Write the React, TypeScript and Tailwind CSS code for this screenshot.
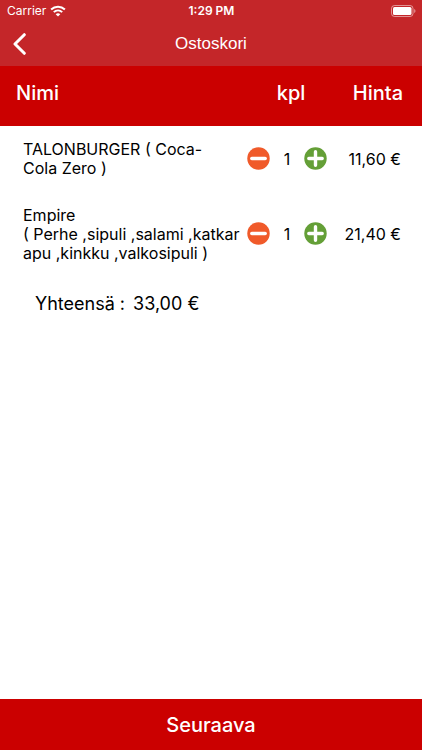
import React, { useState } from "react";

type Item = { id: string; name: string; price: number; count: number };

const initialItems: Item[] = [
  { id: "talonburger", name: "TALONBURGER ( Coca-\nCola Zero )", price: 11.6, count: 1 },
  { id: "empire", name: "Empire\n( Perhe ,sipuli ,salami ,katkar\napu ,kinkku ,valkosipuli )", price: 21.4, count: 1 },
];

const euros = (value: number) => value.toFixed(2).replace(".", ",") + " €";

function StatusBar() {
  return (
    <div className="grid h-[22px] grid-cols-3 items-center pr-1.5 pl-[7px] text-xs leading-4">
      <div className="flex items-center gap-1">
        <span>Carrier</span>
        <svg className="h-[12px] w-[16px]" viewBox="0 0 16 12" fill="none" stroke="currentColor" strokeWidth="2">
          <path d="M1.1 4.5C5 .7 11 .7 14.9 4.5" />
          <path d="M3.8 7.1C6.2 4.8 9.8 4.8 12.2 7.1" />
          <path d="M8 11.5 5.7 9.2C7 8 9 8 10.3 9.2Z" fill="currentColor" stroke="none" />
        </svg>
      </div>
      <span className="text-center font-semibold">1:29 PM</span>
      <svg className="h-[12px] w-[25px] justify-self-end" viewBox="0 0 25 12" fill="none">
        <rect x="0.5" y="0.5" width="21.5" height="11" rx="3" stroke="#fff" strokeOpacity="0.5" />
        <rect x="2" y="2" width="18.5" height="8" rx="1.5" fill="#fff" />
        <path d="M23.3 4v4c1.5-.6 1.5-3.4 0-4Z" fill="#fff" fillOpacity="0.6" />
      </svg>
    </div>
  );
}

function StepButton({ label, kind, onClick }: { label: string; kind: "minus" | "plus"; onClick: () => void }) {
  return (
    <button type="button" aria-label={label} onClick={onClick} className="cursor-pointer pb-0.5">
      <svg className="size-[23px]" viewBox="0 0 23 23" stroke="#fff" strokeWidth="3.4" strokeLinecap="round">
        <circle cx="11.5" cy="11.5" r="11.2" stroke="none" fill={kind === "plus" ? "#649f37" : "#f05a2a"} />
        <path d={kind === "plus" ? "M4.8 11.5h13.4M11.5 4.8v13.4" : "M4.8 11.5h13.4"} />
      </svg>
    </button>
  );
}

export default function App() {
  const [items, setItems] = useState(initialItems);
  const change = (id: string, step: number) =>
    setItems(items.map((item) => (item.id === id ? { ...item, count: Math.max(0, item.count + step) } : item)));
  const total = items.reduce((sum, item) => sum + item.price * item.count, 0);

  return (
    <div className="flex min-h-screen flex-col bg-white font-['Inter',sans-serif] text-black">
      <header className="bg-[#c42629] text-white">
        <StatusBar />
        <div className="grid h-11 grid-cols-[44px_1fr_44px] items-center">
          <button type="button" aria-label="Takaisin" className="cursor-pointer pl-3">
            <svg className="h-[22px] w-[15px]" viewBox="0 0 15 22" fill="none" stroke="#fff" strokeWidth="3" strokeLinecap="round" strokeLinejoin="round">
              <path d="M12.3 1.7 3 11l9.3 9.3" />
            </svg>
          </button>
          <h1 className="text-center font-['Liberation_Sans',Arial,sans-serif] text-[17px] leading-6">Ostoskori</h1>
        </div>
      </header>

      <main className="grow">
        <table className="w-full table-fixed border-collapse">
          <thead className="bg-[#cb0000] text-xl leading-6 text-white">
            <tr className="h-[60px]">
              <th scope="col" className="pb-1.5 pl-4 text-left font-medium">Nimi</th>
              <th scope="col" className="w-[102px] pb-1.5 text-center font-medium">kpl</th>
              <th scope="col" className="w-20 pr-[19px] pb-1.5 text-right font-medium">Hinta</th>
            </tr>
          </thead>
          <tbody className="text-base leading-[19px]">
            {items.map((item) => (
              <tr key={item.id}>
                <td className="py-3.5 pl-[23px] whitespace-pre-line">{item.name}</td>
                <td>
                  <div className="flex items-center justify-between pr-[15px] pl-[7px]">
                    <StepButton kind="minus" label="Vähennä" onClick={() => change(item.id, -1)} />
                    <span>{item.count}</span>
                    <StepButton kind="plus" label="Lisää" onClick={() => change(item.id, 1)} />
                  </div>
                </td>
                <td className="pr-[21px] text-right whitespace-nowrap">{euros(item.price)}</td>
              </tr>
            ))}
          </tbody>
        </table>
        <p className="flex gap-2 pt-[15px] pl-[35px] text-lg leading-6">
          <span>Yhteensä :</span>
          <span>{euros(total)}</span>
        </p>
      </main>

      <button type="button" className="h-[51px] w-full cursor-pointer bg-[#cb0000] text-xl font-medium text-white">
        Seuraava
      </button>
    </div>
  );
}
